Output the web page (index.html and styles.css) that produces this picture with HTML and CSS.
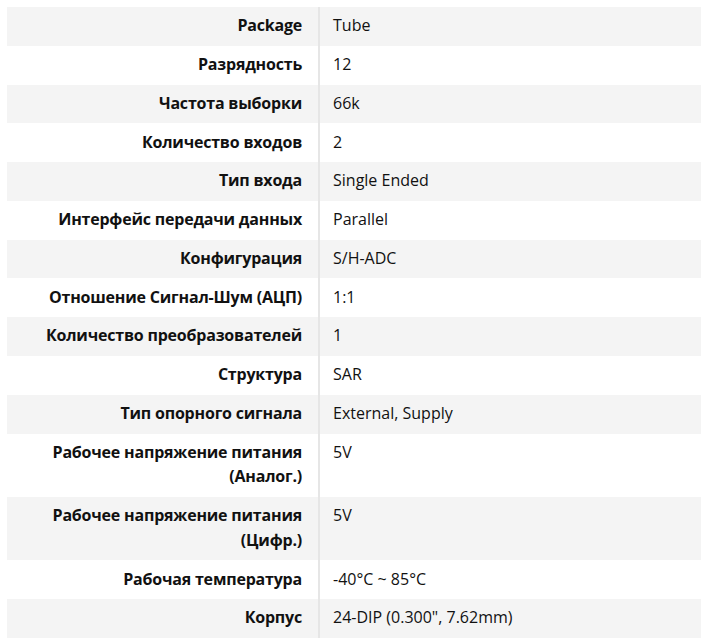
FILE: index.html
```html
<!DOCTYPE html>
<html>
<head>
<meta charset="utf-8">
<link rel="stylesheet" href="styles.css">
</head>
<body>
<table class="specs">
<tbody>
<tr><th>Package</th><td>Tube</td></tr>
<tr><th>Разрядность</th><td>12</td></tr>
<tr><th>Частота выборки</th><td>66k</td></tr>
<tr><th>Количество входов</th><td>2</td></tr>
<tr><th>Тип входа</th><td>Single Ended</td></tr>
<tr><th>Интерфейс передачи данных</th><td>Parallel</td></tr>
<tr><th>Конфигурация</th><td>S/H-ADC</td></tr>
<tr><th>Отношение Сигнал-Шум (АЦП)</th><td>1:1</td></tr>
<tr><th>Количество преобразователей</th><td>1</td></tr>
<tr><th>Структура</th><td>SAR</td></tr>
<tr><th>Тип опорного сигнала</th><td>External, Supply</td></tr>
<tr><th>Рабочее напряжение питания (Аналог.)</th><td>5V</td></tr>
<tr><th>Рабочее напряжение питания (Цифр.)</th><td>5V</td></tr>
<tr><th>Рабочая температура</th><td>-40°C ~ 85°C</td></tr>
<tr><th>Корпус</th><td>24-DIP (0.300", 7.62mm)</td></tr>
</tbody>
</table>
</body>
</html>
```
FILE: styles.css
```css
html, body {
  margin: 0;
  padding: 0;
  background: #ffffff;
}
body {
  padding: 7px 0 0 7px;
  font-family: "Open Sans", "Noto Sans", sans-serif;
  font-size: 16px;
  color: #111111;
}
.specs {
  border-collapse: collapse;
  width: 694px;
}
.specs tr:nth-child(odd) {
  background: #f4f4f4;
}
.specs th {
  width: 279px;
  text-align: right;
  font-weight: 700;
  letter-spacing: -0.2px;
  vertical-align: top;
  padding: 6.2px 16px 8px 16px;
  line-height: 24.6px;
  border-right: 2px solid #e6e6e6;
}
.specs td {
  text-align: left;
  vertical-align: top;
  padding: 6.2px 13px 8px 13px;
  line-height: 24.6px;
}
```
